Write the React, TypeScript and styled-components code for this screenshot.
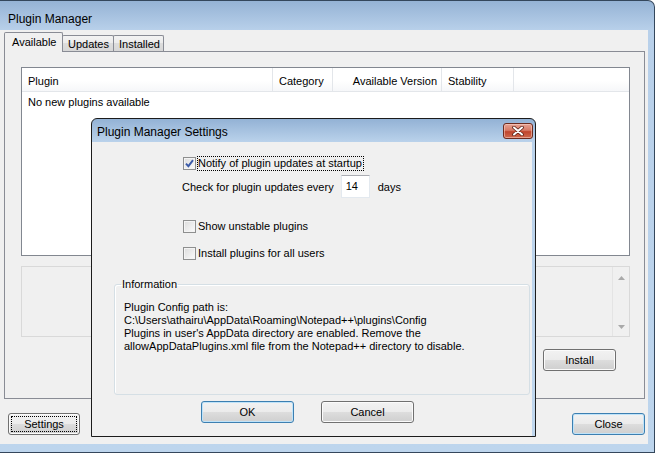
import React from "react";
import styled, { createGlobalStyle, css } from "styled-components";

const GlobalStyle = createGlobalStyle`
  html, body {
    margin: 0;
    padding: 0;
    background: #fff;
  }
  body {
    font-family: "Liberation Sans", Arial, sans-serif;
    font-size: 11px;
    color: #000;
    overflow: hidden;
  }
  * {
    box-sizing: border-box;
  }
`;

const Desktop = styled.div`
  position: relative;
  width: 659px;
  height: 453px;
  overflow: hidden;
  background: #fff;
`;

const Window = styled.div`
  width: 655px;
  height: 453px;
  display: flex;
  flex-direction: column;
  border: 1px solid #34475c;
  border-left: none;
  border-top-right-radius: 7px;
  background: linear-gradient(#95b3d5 0px, #b8d0ea 29px, #bdd5ed 100%);
`;

const TitleBar = styled.div`
  height: 29px;
  display: flex;
  align-items: center;
  padding: 7px 0 0 8px;
  font-size: 12px;
  color: #000;
`;

const Client = styled.div`
  flex: 1;
  margin: 0 6px 8px 0;
  background: #f0f0f0;
  display: flex;
  flex-direction: column;
  padding: 2px 3px 0 4px;
`;

const TabStrip = styled.div`
  height: 19px;
  display: flex;
  align-items: flex-end;
`;

const Tab = styled.div<{ $active?: boolean; $width: number }>`
  width: ${(p) => p.$width}px;
  border: 1px solid #898c95;
  border-bottom: none;
  border-radius: 2px 2px 0 0;
  ${(p) =>
    p.$active
      ? css`
          height: 20px;
          margin-bottom: -1px;
          position: relative;
          z-index: 1;
          background: #f0f0f0;
          padding: 3px 0 0 7px;
        `
      : css`
          height: 16px;
          margin-left: -1px;
          background: linear-gradient(#f3f3f3, #ebebeb 50%, #dddddd 50%, #d7d7d7);
          padding: 2px 0 0 5px;
        `}
`;

const TabPanel = styled.div`
  height: 348px;
  border: 1px solid #898c95;
  background: #f0f0f0;
  padding: 15px 14px 0 16px;
  display: flex;
  flex-direction: column;
`;

const ListView = styled.div`
  height: 189px;
  border: 1px solid #828790;
  background: #fff;
  display: flex;
  flex-direction: column;
`;

const ListHeader = styled.div`
  height: 24px;
  display: flex;
  background: linear-gradient(#ffffff 0%, #ffffff 55%, #f6f7f9 100%);
  border-bottom: 1px solid #e3e6ea;
`;

const HeaderCell = styled.div<{ $width?: number; $right?: boolean }>`
  ${(p) => (p.$width ? `width: ${p.$width}px;` : "flex: 1;")}
  border-right: ${(p) => (p.$width ? "1px solid #e3e6ea" : "none")};
  display: flex;
  align-items: center;
  justify-content: ${(p) => (p.$right ? "flex-end" : "flex-start")};
  padding: 2px ${(p) => (p.$right ? "4px" : "0")} 0 ${(p) => (p.$right ? "0" : "6px")};
`;

const ListRow = styled.div`
  height: 18px;
  display: flex;
  align-items: center;
  padding: 1px 0 0 6px;
`;

const DescBox = styled.div`
  margin-top: 10px;
  height: 71px;
  border: 1px solid #d9d9d9;
  background: #f0f0f0;
  display: flex;
  justify-content: flex-end;
`;

const ScrollTrack = styled.div`
  width: 17px;
  border-left: 1px solid #e4e4e4;
  display: flex;
  flex-direction: column;
  justify-content: space-between;
  align-items: center;
  padding: 9px 0 7px;
`;

const InstallRow = styled.div`
  margin-top: 12px;
  display: flex;
  justify-content: flex-end;
  padding-right: 14px;
`;

const BottomBar = styled.div`
  margin-top: 14px;
  display: flex;
  justify-content: space-between;
  padding-left: 4px;
`;

const Button = styled.button<{ $width: number; $default?: boolean; $focus?: boolean }>`
  position: relative;
  width: ${(p) => p.$width}px;
  height: 22px;
  padding: 0;
  font-family: "Liberation Sans", Arial, sans-serif;
  font-size: 11px;
  color: #000;
  border: 1px solid ${(p) => (p.$default ? "#3c7fb1" : "#707070")};
  border-radius: 3px;
  background: linear-gradient(#f2f2f2 0%, #ebebeb 50%, #dddddd 50%, #cfcfcf 100%);
  box-shadow: inset 0 0 0 1px ${(p) => (p.$default ? "#bfe3f9" : "#fbfbfb")};
  ${(p) =>
    p.$focus &&
    css`
      &::after {
        content: "";
        position: absolute;
        inset: 2px;
        border: 1px dotted #000;
      }
    `}
`;

const DialogWindow = styled.div`
  position: absolute;
  left: 91px;
  top: 118px;
  width: 445px;
  height: 319px;
  border: 1px solid #1c1c1c;
  border-radius: 6px 6px 0 0;
  background: linear-gradient(#93b2d5 0px, #bad2eb 23px, #c0d7ee 100%);
  display: flex;
  flex-direction: column;
`;

const DialogTitleBar = styled.div`
  height: 23px;
  display: flex;
  justify-content: space-between;
  padding: 0 2px 0 5px;
  font-size: 12px;
`;

const DialogTitle = styled.div`
  padding-top: 6px;
`;

const CloseBox = styled.div`
  margin-top: 4px;
  width: 30px;
  height: 16px;
  border: 1px solid #6d2b1f;
  border-radius: 3px;
  background: linear-gradient(#e6a293 0%, #d77a66 45%, #c0452d 55%, #cf6a4f 100%);
  box-shadow: inset 0 0 0 1px rgba(255, 220, 210, 0.5);
  display: flex;
  align-items: center;
  justify-content: center;
`;

const DialogBody = styled.div`
  flex: 1;
  margin: 0 3px 0 0;
  background: #f0f0f0;
  display: flex;
  flex-direction: column;
  padding-top: 14px;
`;

const Options = styled.div`
  padding-left: 91px;
  display: flex;
  flex-direction: column;
`;

const CheckRow = styled.div<{ $gap?: number }>`
  height: 15px;
  display: flex;
  align-items: center;
  margin-top: ${(p) => p.$gap ?? 0}px;
`;

const CheckBox = styled.div`
  width: 13px;
  height: 13px;
  border: 1px solid #8e8f8f;
  background: linear-gradient(135deg, #dcdcdc, #fbfbfb);
  box-shadow: inset 0 0 0 1px #f4f4f4;
  display: flex;
  align-items: center;
  justify-content: center;
`;

const CheckLabel = styled.span<{ $focus?: boolean }>`
  margin-left: 1px;
  padding: 0 1px 0 0;
  line-height: 13px;
  border: 1px ${(p) => (p.$focus ? "dotted #000" : "solid transparent")};
`;

const IntervalRow = styled.div`
  margin-top: 4px;
  height: 23px;
  display: flex;
  align-items: center;
  margin-left: -1px;
`;

const NumberBox = styled.div`
  width: 29px;
  height: 23px;
  margin: 0 8px 0 7px;
  background: #fff;
  border: 1px solid #e3e9ef;
  border-top-color: #abadb3;
  display: flex;
  align-items: center;
  padding: 0 0 2px 4px;
`;

const Group = styled.fieldset`
  margin: 17px 2px 0 22px;
  height: 117px;
  padding: 0;
  border: 1px solid #d5dfe5;
  border-radius: 3px;
  box-shadow: inset 1px 1px 0 #fff;
`;

const GroupLegend = styled.legend`
  margin-left: 6px;
  padding: 0 1px;
  line-height: 13px;
`;

const GroupText = styled.div`
  padding: 10px 0 0 9px;
  line-height: 13px;
`;

const DialogButtons = styled.div`
  margin-top: 6px;
  display: flex;
  gap: 27px;
  padding-left: 109px;
`;

function CheckMark() {
  return (
    <svg width="9" height="9" viewBox="0 0 9 9">
      <path d="M1 4.6 L3.4 7.2 L8 1.2" fill="none" stroke="#3a5aa8" strokeWidth="1.9" />
    </svg>
  );
}

function CloseGlyph() {
  return (
    <svg width="14" height="10" viewBox="0 0 14 10">
      <path d="M3 1.5 L11 8.5 M11 1.5 L3 8.5" stroke="#5a2116" strokeWidth="3.6" strokeLinecap="round" />
      <path d="M3 1.5 L11 8.5 M11 1.5 L3 8.5" stroke="#fff" strokeWidth="2" strokeLinecap="round" />
    </svg>
  );
}

function Arrow({ up }: { up?: boolean }) {
  return (
    <svg width="7" height="4" viewBox="0 0 7 4">
      <path d={up ? "M0 4 L3.5 0 L7 4 Z" : "M0 0 L7 0 L3.5 4 Z"} fill="#a9a9a9" />
    </svg>
  );
}

export default function App() {
  return (
    <>
      <GlobalStyle />
      <Desktop>
        <Window>
          <TitleBar>Plugin Manager</TitleBar>
          <Client>
            <TabStrip>
              <Tab $active $width={59}>Available</Tab>
              <Tab $width={52}>Updates</Tab>
              <Tab $width={51}>Installed</Tab>
            </TabStrip>
            <TabPanel>
              <ListView>
                <ListHeader>
                  <HeaderCell $width={251}>Plugin</HeaderCell>
                  <HeaderCell $width={60}>Category</HeaderCell>
                  <HeaderCell $width={109} $right>
                    Available Version
                  </HeaderCell>
                  <HeaderCell $width={72}>Stability</HeaderCell>
                  <HeaderCell />
                </ListHeader>
                <ListRow>No new plugins available</ListRow>
              </ListView>
              <DescBox>
                <ScrollTrack>
                  <Arrow up />
                  <Arrow />
                </ScrollTrack>
              </DescBox>
              <InstallRow>
                <Button $width={73}>Install</Button>
              </InstallRow>
            </TabPanel>
            <BottomBar>
              <Button $width={72} $focus>
                Settings
              </Button>
              <Button $width={73} $default>
                Close
              </Button>
            </BottomBar>
          </Client>
        </Window>

        <DialogWindow>
          <DialogTitleBar>
            <DialogTitle>Plugin Manager Settings</DialogTitle>
            <CloseBox>
              <CloseGlyph />
            </CloseBox>
          </DialogTitleBar>
          <DialogBody>
            <Options>
              <CheckRow>
                <CheckBox>
                  <CheckMark />
                </CheckBox>
                <CheckLabel $focus>Notify of plugin updates at startup</CheckLabel>
              </CheckRow>
              <IntervalRow>
                Check for plugin updates every
                <NumberBox>14</NumberBox>
                days
              </IntervalRow>
              <CheckRow $gap={21}>
                <CheckBox />
                <CheckLabel>Show unstable plugins</CheckLabel>
              </CheckRow>
              <CheckRow $gap={12}>
                <CheckBox />
                <CheckLabel>Install plugins for all users</CheckLabel>
              </CheckRow>
            </Options>
            <Group>
              <GroupLegend>Information</GroupLegend>
              <GroupText>
                Plugin Config path is:
                <br />
                C:\Users\athairu\AppData\Roaming\Notepad++\plugins\Config
                <br />
                Plugins in user's AppData directory are enabled. Remove the
                <br />
                allowAppDataPlugins.xml file from the Notepad++ directory to disable.
              </GroupText>
            </Group>
            <DialogButtons>
              <Button $width={93} $default>
                OK
              </Button>
              <Button $width={93}>Cancel</Button>
            </DialogButtons>
          </DialogBody>
        </DialogWindow>
      </Desktop>
    </>
  );
}
